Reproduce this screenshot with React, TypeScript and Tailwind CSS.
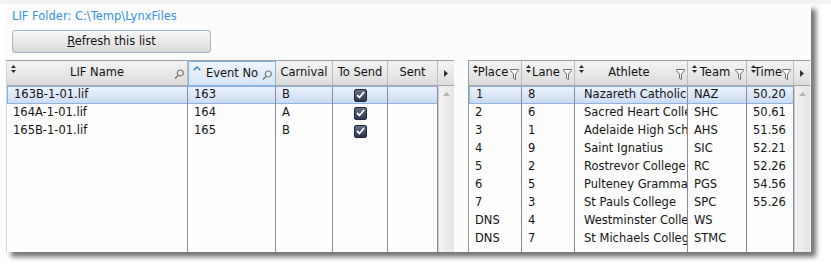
import React from "react";

type Col = { key: string; label: string; w: number; pad?: number; center?: boolean };

const leftCols: Col[] = [
  { key: "name", label: "LIF Name", w: 181 },
  { key: "event", label: "Event No", w: 88 },
  { key: "carnival", label: "Carnival", w: 57 },
  { key: "send", label: "To Send", w: 55, center: true },
  { key: "sent", label: "Sent", w: 50 },
];

const rightCols: Col[] = [
  { key: "place", label: "Place", w: 53 },
  { key: "lane", label: "Lane", w: 53 },
  { key: "athlete", label: "Athlete", w: 113, pad: 9 },
  { key: "team", label: "Team", w: 59 },
  { key: "time", label: "Time", w: 47 },
];

const lifRows = [
  { name: "163B-1-01.lif", event: "163", carnival: "B", send: true, sent: "" },
  { name: "164A-1-01.lif", event: "164", carnival: "A", send: true, sent: "" },
  { name: "165B-1-01.lif", event: "165", carnival: "B", send: true, sent: "" },
];

const results = [
  { place: "1", lane: "8", athlete: "Nazareth Catholic", team: "NAZ", time: "50.20" },
  { place: "2", lane: "6", athlete: "Sacred Heart College", team: "SHC", time: "50.61" },
  { place: "3", lane: "1", athlete: "Adelaide High School", team: "AHS", time: "51.56" },
  { place: "4", lane: "9", athlete: "Saint Ignatius", team: "SIC", time: "52.21" },
  { place: "5", lane: "2", athlete: "Rostrevor College", team: "RC", time: "52.26" },
  { place: "6", lane: "5", athlete: "Pulteney Grammar", team: "PGS", time: "54.56" },
  { place: "7", lane: "3", athlete: "St Pauls College", team: "SPC", time: "55.26" },
  { place: "DNS", lane: "4", athlete: "Westminster College", team: "WS", time: "" },
  { place: "DNS", lane: "7", athlete: "St Michaels College", team: "STMC", time: "" },
];

function SortGlyph() {
  return (
    <svg width="5" height="8" viewBox="0 0 5 8" className="absolute left-[4px] top-[4px]">
      <path d="M2.5 0 L5 3 H0 Z" fill="#2a2a2a" />
      <path d="M0 5 H5 L2.5 8 Z" fill="#2a2a2a" />
    </svg>
  );
}

function Magnifier() {
  return (
    <svg width="10" height="11" viewBox="0 0 10 11" className="absolute right-[3px] top-[8px]">
      <circle cx="6.3" cy="4" r="3" stroke="#7a7a7a" strokeWidth="1.2" fill="none" />
      <line x1="4.2" y1="6.2" x2="1" y2="9.6" stroke="#7a7a7a" strokeWidth="1.5" />
    </svg>
  );
}

function Funnel() {
  return (
    <svg width="9" height="11" viewBox="0 0 9 11" className="absolute right-[2px] top-[8px]">
      <path d="M0.5 0.5 H8.5 V1.5 L5.5 5 V10.5 L3.5 9.3 V5 L0.5 1.5 Z" stroke="#707070" strokeWidth="1" fill="#fafafa" />
    </svg>
  );
}

function Caret() {
  return (
    <svg width="8" height="5" viewBox="0 0 8 5" className="absolute left-[4px] top-[4px]">
      <polyline points="0.7,4.3 4,1 7.3,4.3" stroke="#3d7cc9" strokeWidth="1.4" fill="none" />
    </svg>
  );
}

function Check() {
  return (
    <div className="flex h-[13px] w-[13px] items-center justify-center rounded-[2px] border border-[#1f2638] bg-gradient-to-b from-[#66708a] to-[#2c354d]">
      <svg width="9" height="8" viewBox="0 0 9 8">
        <polyline points="1,4 3.5,6.5 8,1" stroke="#ffffff" strokeWidth="1.8" fill="none" />
      </svg>
    </div>
  );
}

function ScrollColumn() {
  return (
    <div className="flex w-[17px] flex-col">
      <div className="flex h-[25px] items-center justify-center border-b border-[#a5a5a5] bg-gradient-to-b from-[#f4f4f4] to-[#dcdcdc]">
        <svg width="4" height="7" viewBox="0 0 4 7">
          <path d="M0 0 L4 3.5 L0 7 Z" fill="#333" />
        </svg>
      </div>
      <div className="flex flex-1 justify-center border-l border-[#cfcfcf] bg-gradient-to-r from-[#f3f3f3] to-[#e4e4e4] pt-[6px]">
        <svg width="7" height="4" viewBox="0 0 7 4">
          <path d="M0 4 L3.5 0 L7 4 Z" fill="#b4b4b4" />
        </svg>
      </div>
    </div>
  );
}

function HeaderCell({ col, kind, hot }: { col: Col; kind: "search" | "filter"; hot?: boolean }) {
  return (
    <div
      className={
        hot
          ? "relative flex h-[25px] shrink-0 items-center justify-center border border-[#86b3e4] bg-gradient-to-b from-[#eef5fd] to-[#d6e6f8] text-[#111]"
          : "relative flex h-[25px] shrink-0 items-center justify-center border-r border-b border-[#bdbdbd] border-b-[#a5a5a5] bg-gradient-to-b from-[#f4f4f4] to-[#dcdcdc] text-[#111]"
      }
      style={{ width: col.w }}
    >
      {hot ? <Caret /> : kind === "filter" || col.key === "name" ? <SortGlyph /> : null}
      <span className={kind === "filter" ? "pr-[4px]" : ""}>{col.label}</span>
      {kind === "search" && (col.key === "name" || col.key === "event") && <Magnifier />}
      {kind === "filter" && <Funnel />}
    </div>
  );
}

function Row({
  cols,
  values,
  selected,
}: {
  cols: Col[];
  values: Record<string, React.ReactNode>;
  selected?: boolean;
}) {
  return (
    <div className="flex h-[18px]">
      {cols.map((c, i) => (
        <div
          key={c.key}
          className={
            (selected
              ? "border-y border-y-[#8db3e2] bg-gradient-to-b from-[#ebf3fd] to-[#cadcf3] "
              : "") +
            (selected && i === 0 ? "border-l border-l-[#8db3e2] " : "") +
            (c.center ? "justify-center " : "") +
            "flex shrink-0 items-center overflow-hidden whitespace-nowrap border-r border-r-[#8b8a9c] text-[#141414]"
          }
          style={{ width: c.w, paddingLeft: c.center ? 0 : c.pad ?? 6 }}
        >
          {values[c.key]}
        </div>
      ))}
    </div>
  );
}

function Filler({ cols }: { cols: Col[] }) {
  return (
    <div className="flex flex-1">
      {cols.map((c) => (
        <div key={c.key} className="shrink-0 border-r border-[#8b8a9c]" style={{ width: c.w }} />
      ))}
    </div>
  );
}

export default function App() {
  return (
    <div className="h-[271px] w-[831px] bg-white font-['DejaVu_Sans',sans-serif] text-[11.5px]">
      <div className="h-[4px] bg-[#f3f3f3]" />
      <div className="ml-[6px] flex h-[248px] w-[805px] flex-col bg-[#fcfcfc] shadow-[5px_5px_5px_rgba(0,0,0,0.55)]">
        <div className="pl-[6px] pt-[4px] leading-[16px] text-[#3593df]">LIF Folder: C:\Temp\LynxFiles</div>
        <button className="ml-[6px] mt-[6px] h-[23px] w-[199px] rounded-[3px] border border-[#a3b6cc] bg-gradient-to-b from-[#f6f6f6] via-[#e9e9e9] to-[#d8d8d8] text-[#111]">
          <span className="underline">R</span>efresh this list
        </button>
        <div className="mt-[7px] flex flex-1">
          <div className="flex w-[448px] border-t border-[#a0a0a0] bg-[#fdfdfd]">
            <div className="flex flex-1 flex-col border-l border-[#d4d4d4]">
              <div className="flex">
                {leftCols.map((c) => (
                  <HeaderCell key={c.key} col={c} kind="search" hot={c.key === "event"} />
                ))}
              </div>
              {lifRows.map((r, i) => (
                <Row
                  key={r.name}
                  cols={leftCols}
                  selected={i === 0}
                  values={{
                    name: r.name,
                    event: r.event,
                    carnival: r.carnival,
                    send: r.send ? <Check /> : null,
                    sent: r.sent,
                  }}
                />
              ))}
              <Filler cols={leftCols} />
            </div>
            <ScrollColumn />
          </div>
          <div className="ml-[14px] flex w-[342px] border-t border-l border-[#9a9a9a] bg-[#fdfdfd]">
            <div className="flex flex-1 flex-col">
              <div className="flex">
                {rightCols.map((c) => (
                  <HeaderCell key={c.key} col={c} kind="filter" />
                ))}
              </div>
              {results.map((r, i) => (
                <Row key={r.athlete} cols={rightCols} selected={i === 0} values={r} />
              ))}
              <Filler cols={rightCols} />
            </div>
            <ScrollColumn />
          </div>
        </div>
      </div>
    </div>
  );
}
